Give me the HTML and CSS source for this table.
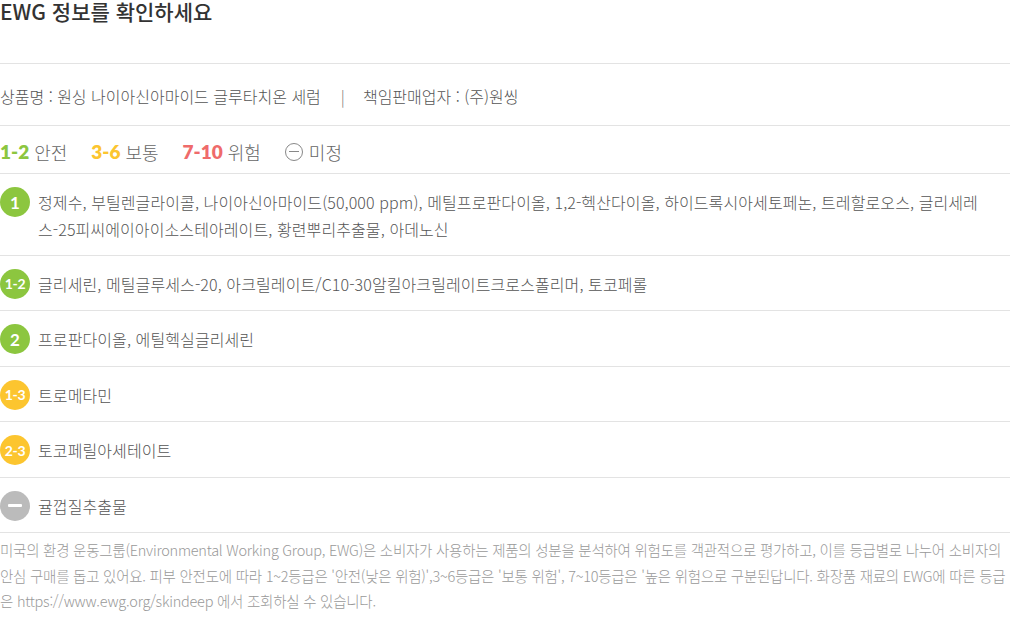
FILE: index.html
```html
<!DOCTYPE html>
<html lang="ko">
<head>
  <meta charset="UTF-8">
  <title>EWG 정보</title>
  <link rel="stylesheet" href="styles.css">
</head>
<body>

<div class="ewg">
  <h2 class="ewg-title">EWG 정보를 확인하세요</h2>

  <div class="product">
    <span>상품명 : 원싱 나이아신아마이드 글루타치온 세럼</span>
    <span class="sep">|</span>
    <span>책임판매업자 : (주)원씽</span>
  </div>

  <div class="legend">
    <span class="lg"><b class="num green">1-2</b> 안전</span>
    <span class="lg"><b class="num yellow">3-6</b> 보통</span>
    <span class="lg"><b class="num red">7-10</b> 위험</span>
    <span class="lg"><i class="none-icon"></i>미정</span>
  </div>

  <ul class="ingredients">
    <li>
      <span class="badge bg-green">1</span>
      <p>정제수, 부틸렌글라이콜, 나이아신아마이드(50,000 ppm), 메틸프로판다이올, 1,2-헥산다이올, 하이드록시아세토페논, 트레할로오스, 글리세레스-25피씨에이아이소스테아레이트, 황련뿌리추출물, 아데노신</p>
    </li>
    <li>
      <span class="badge bg-green small">1-2</span>
      <p>글리세린, 메틸글루세스-20, 아크릴레이트/C10-30알킬아크릴레이트크로스폴리머, 토코페롤</p>
    </li>
    <li>
      <span class="badge bg-green">2</span>
      <p>프로판다이올, 에틸헥실글리세린</p>
    </li>
    <li>
      <span class="badge bg-yellow small">1-3</span>
      <p>트로메타민</p>
    </li>
    <li>
      <span class="badge bg-yellow small">2-3</span>
      <p>토코페릴아세테이트</p>
    </li>
    <li>
      <span class="badge bg-gray"><i class="dash"></i></span>
      <p>귤껍질추출물</p>
    </li>
  </ul>

  <p class="note">미국의 환경 운동그룹(Environmental Working Group, EWG)은 소비자가 사용하는 제품의 성분을 분석하여 위험도를 객관적으로 평가하고, 이를 등급별로 나누어 소비자의 안심 구매를 돕고 있어요. 피부 안전도에 따라 1~2등급은 '안전(낮은 위험)',3~6등급은 '보통 위험', 7~10등급은 '높은 위험으로 구분된답니다. 화장품 재료의 EWG에 따른 등급은 https://www.ewg.org/skindeep 에서 조회하실 수 있습니다.</p>
</div>

</body>
</html>
```

FILE: styles.css
```css
body {
  margin: 0;
  background: #fff;
  font-family: "Noto Sans CJK KR", "Noto Sans", sans-serif;
  color: #555;
}

.ewg {
  width: 1010px;
}

.ewg-title {
  margin: 0;
  height: 64px;
  font-size: 21px;
  line-height: 23px;
  font-weight: 500;
  color: #333;
  border-bottom: 1px solid #e3e3e3;
  box-sizing: border-box;
}

.product {
  height: 62px;
  display: flex;
  align-items: center;
  font-size: 16px;
  font-weight: 300;
  color: #555;
  border-bottom: 1px solid #e3e3e3;
  box-sizing: border-box;
  padding-top: 2px;
}

.product .sep {
  margin: 0 18px 0 20px;
  color: #777;
}

.legend {
  height: 48px;
  display: flex;
  align-items: center;
  gap: 24px;
  font-size: 18px;
  font-weight: 300;
  color: #666;
  border-bottom: 1px solid #e3e3e3;
  box-sizing: border-box;
  padding-top: 4px;
}

.lg {
  display: flex;
  align-items: center;
  gap: 5px;
}

.num {
  font-family: "Lato", "Open Sans", sans-serif;
  font-weight: 800;
  font-size: 19px;
}

.green { color: #8cc63f; }
.yellow { color: #fcc52f; }
.red { color: #ef6b6b; }

.none-icon {
  width: 18px;
  height: 18px;
  border: 1.2px solid #888;
  border-radius: 50%;
  box-sizing: border-box;
  position: relative;
  margin-right: 1px;
}

.none-icon::after {
  content: "";
  position: absolute;
  left: 3px;
  right: 3px;
  top: 7.5px;
  height: 1.2px;
  background: #888;
}

.ingredients {
  list-style: none;
  margin: 0;
  padding: 0;
}

.ingredients li {
  display: flex;
  align-items: flex-start;
  gap: 8px;
  padding: 15px 0 11.5px;
  border-bottom: 1px solid #e3e3e3;
}

.ingredients p {
  margin: 0;
  font-size: 16px;
  font-weight: 300;
  line-height: 27px;
  letter-spacing: 0.1px;
  color: #555;
  padding-right: 20px;
}

.badge {
  flex: none;
  width: 30px;
  height: 30px;
  border-radius: 50%;
  color: #fff;
  font-family: "Lato", "Open Sans", sans-serif;
  font-weight: 700;
  font-size: 17px;
  display: flex;
  align-items: center;
  justify-content: center;
  margin-top: -2px;
}

.badge.small {
  font-size: 14px;
  letter-spacing: -0.3px;
}

.bg-green { background: #8cc63f; }
.bg-yellow { background: #fcc52f; }
.bg-gray { background: #bbbbbb; }

.dash {
  width: 14px;
  height: 3px;
  background: #fff;
  border-radius: 1px;
}

.note {
  margin: 0;
  padding-top: 4px;
  font-size: 14.5px;
  font-weight: 300;
  line-height: 25.5px;
  letter-spacing: -0.25px;
  color: #999;
}
```
